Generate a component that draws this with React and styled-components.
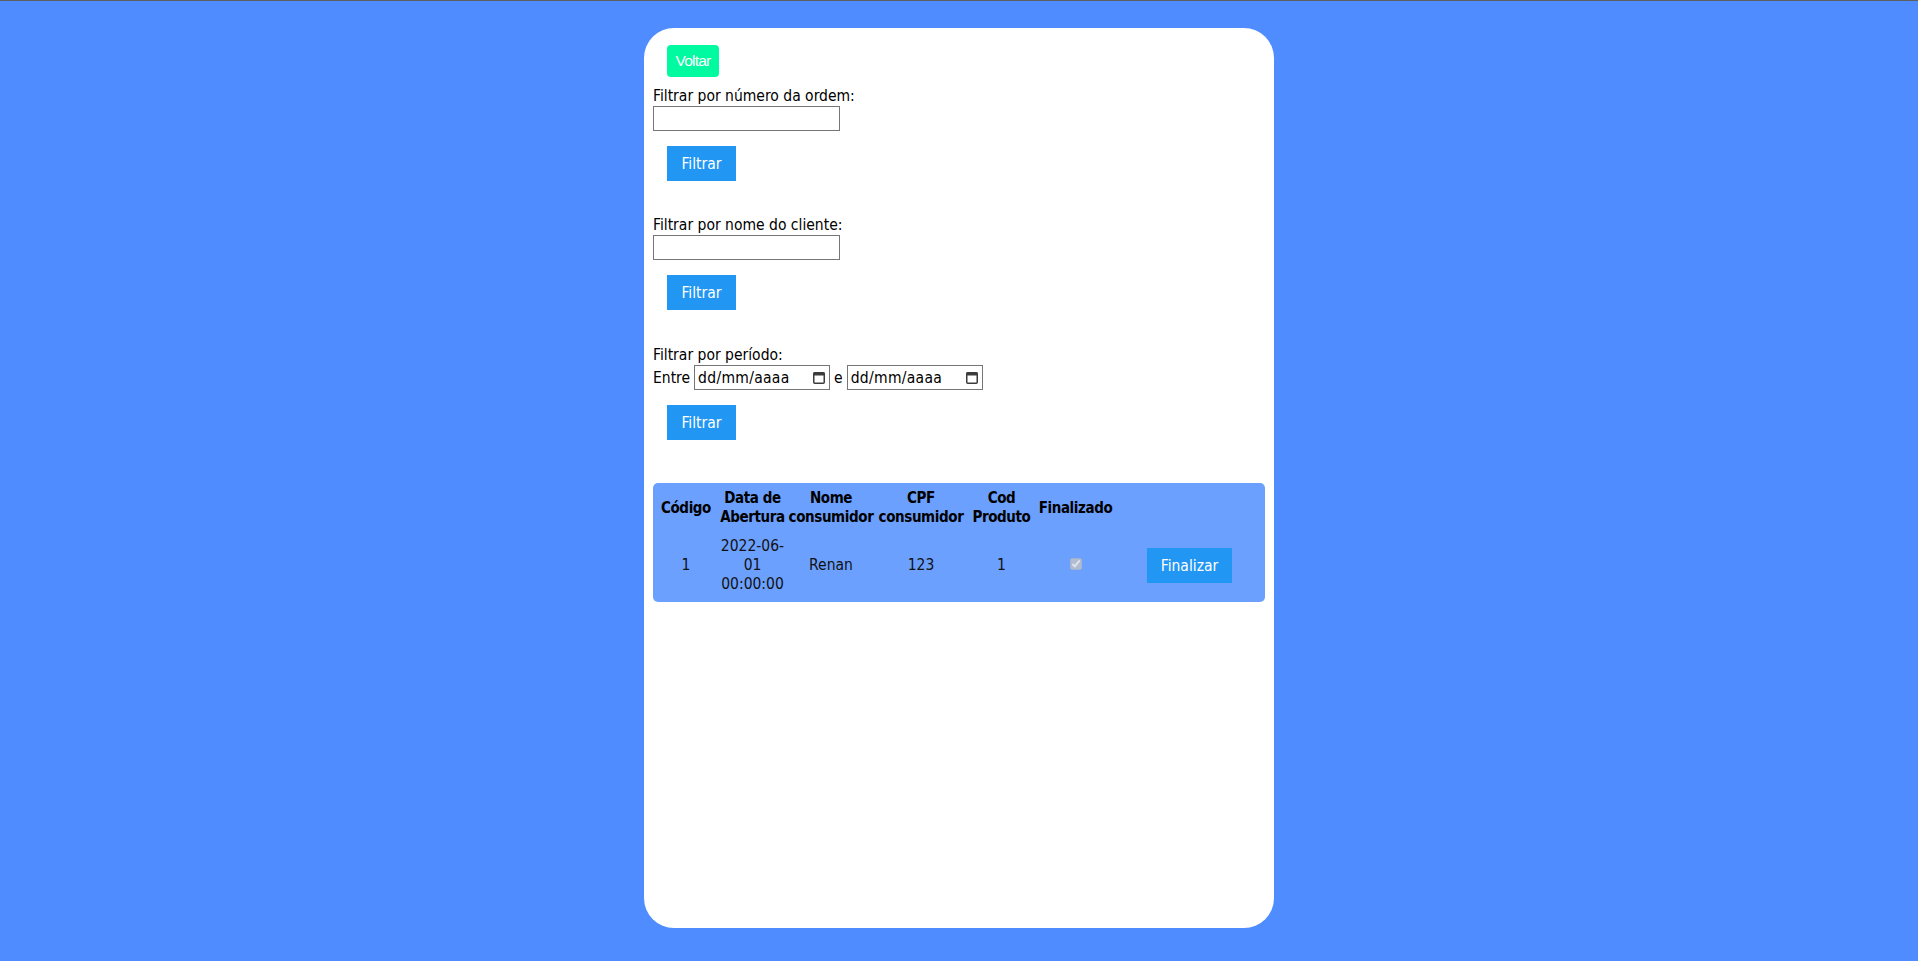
import React from 'react';
import styled, {createGlobalStyle} from 'styled-components';

const GlobalStyle = createGlobalStyle`
    * {
        box-sizing: border-box;
    }
    body {
        margin: 0;
        font-family: "DejaVu Sans Condensed", "DejaVu Sans", sans-serif;
        font-size: 15.5px;
        color: #000;
    }
`

const Page = styled.div`
    display: flex;
    justify-content: center;
    min-height: 100vh;
    padding-top: 27px;
    background-color: #4f8cff;
    border-top: 1px solid #5e5e5e;
`

const Card = styled.div`
    display: flex;
    flex-direction: column;
    align-items: flex-start;
    width: 630px;
    height: 900px;
    padding: 17px 9px;
    background: white;
    border-radius: 30px;
`

const BackButton = styled.button`
    height: 32px;
    width: 52px;
    margin-left: 14px;
    padding: 0;
    border: none;
    border-radius: 4px;
    background-color: #00fa9f;
    color: white;
    font-family: "Liberation Sans", Arial, sans-serif;
    font-size: 15.5px;
    letter-spacing: -0.8px;
`

const FilterGroup = styled.div`
    display: flex;
    flex-direction: column;
    align-items: flex-start;
    margin-top: ${props => props.gap}px;
`

const Label = styled.label`
    display: block;
    line-height: 19px;
    height: 19px;
`

const TextInput = styled.input`
    width: 187px;
    height: 25px;
    border: 1px solid #767676;
    padding: 2px 4px;
    font: inherit;
`

const Button = styled.button`
    height: 35px;
    width: ${props => props.width}px;
    margin-top: ${props => props.top || 0}px;
    margin-left: ${props => props.left || 0}px;
    padding: 0;
    border: none;
    background-color: #2196f3;
    color: white;
    font-family: inherit;
    font-size: 15.5px;
`

const DateRow = styled.div`
    display: flex;
    align-items: center;
    gap: 4px;
    height: 25px;
`

const DateBox = styled.div`
    display: flex;
    align-items: center;
    justify-content: space-between;
    width: 136px;
    height: 25px;
    padding: 0 4px 0 3px;
    border: 1px solid #767676;
    letter-spacing: 0.3px;
`

const Table = styled.table`
    width: 100%;
    margin-top: 43px;
    padding-bottom: 2px;
    table-layout: fixed;
    border-spacing: 2px;
    background-color: #6ca0ff;
    border-radius: 5px;
`

const Th = styled.th`
    width: ${props => props.w ? props.w + 'px' : 'auto'};
    padding: 4px 0;
    font-size: 15px;
    font-weight: bold;
    letter-spacing: -0.4px;
    line-height: 19px;
    text-align: center;
    vertical-align: middle;
    white-space: nowrap;
`

const Td = styled.td`
    padding: 4px 1px;
    line-height: 19px;
    text-align: center;
    vertical-align: middle;
    color: #111;
`

const Check = styled.input`
    width: 12px;
    height: 12px;
    margin: 0;
`

const CalendarIcon = () => (
    <svg width="12" height="13" viewBox="0 0 12 13">
        <rect x="0.75" y="1.75" width="10.5" height="10.5" rx="1" fill="none" stroke="#3c3c3c" strokeWidth="1.5" />
        <rect x="0.5" y="1.5" width="11" height="3" fill="#3c3c3c" />
    </svg>
)

const DateField = () => (
    <DateBox>
        <span>dd/mm/aaaa</span>
        <CalendarIcon />
    </DateBox>
)

const orders = [
    {id: 1, date: ['2022-06-', '01', '00:00:00'], name: 'Renan', cpf: '123', product: 1, done: true}
]

// header cells break where the original table wrapped them
const headers = [
    {w: 62, lines: ['Código']},
    {w: 67, lines: ['Data de', 'Abertura']},
    {w: 86, lines: ['Nome', 'consumidor']},
    {w: 90, lines: ['CPF', 'consumidor']},
    {w: 67, lines: ['Cod', 'Produto']},
    {w: 77, lines: ['Finalizado']},
    {lines: []}
]

const App = () => {
    const rows = orders.map(order => {
        return (
            <tr key={order.id}>
                <Td>{order.id}</Td>
                <Td>{order.date.map((part, i) => <div key={i}>{part}</div>)}</Td>
                <Td>{order.name}</Td>
                <Td>{order.cpf}</Td>
                <Td>{order.product}</Td>
                <Td><Check type="checkbox" checked={order.done} disabled readOnly /></Td>
                <Td><Button width={85}>Finalizar</Button></Td>
            </tr>
        )
    })

    return (
        <Page>
            <GlobalStyle />
            <Card>
                <BackButton>Voltar</BackButton>

                <FilterGroup gap={10}>
                    <Label>Filtrar por número da ordem:</Label>
                    <TextInput />
                    <Button width={69} top={15} left={14}>Filtrar</Button>
                </FilterGroup>

                <FilterGroup gap={35}>
                    <Label>Filtrar por nome do cliente:</Label>
                    <TextInput />
                    <Button width={69} top={15} left={14}>Filtrar</Button>
                </FilterGroup>

                <FilterGroup gap={36}>
                    <Label>Filtrar por período:</Label>
                    <DateRow>
                        <span>Entre</span>
                        <DateField />
                        <span>e</span>
                        <DateField />
                    </DateRow>
                    <Button width={69} top={15} left={14}>Filtrar</Button>
                </FilterGroup>

                <Table>
                    <thead>
                        <tr>
                            {headers.map((h, i) => (
                                <Th key={i} w={h.w}>
                                    {h.lines.map((line, j) => <div key={j}>{line}</div>)}
                                </Th>
                            ))}
                        </tr>
                    </thead>
                    <tbody>
                        {rows}
                    </tbody>
                </Table>
            </Card>
        </Page>
    )
}

export default App
